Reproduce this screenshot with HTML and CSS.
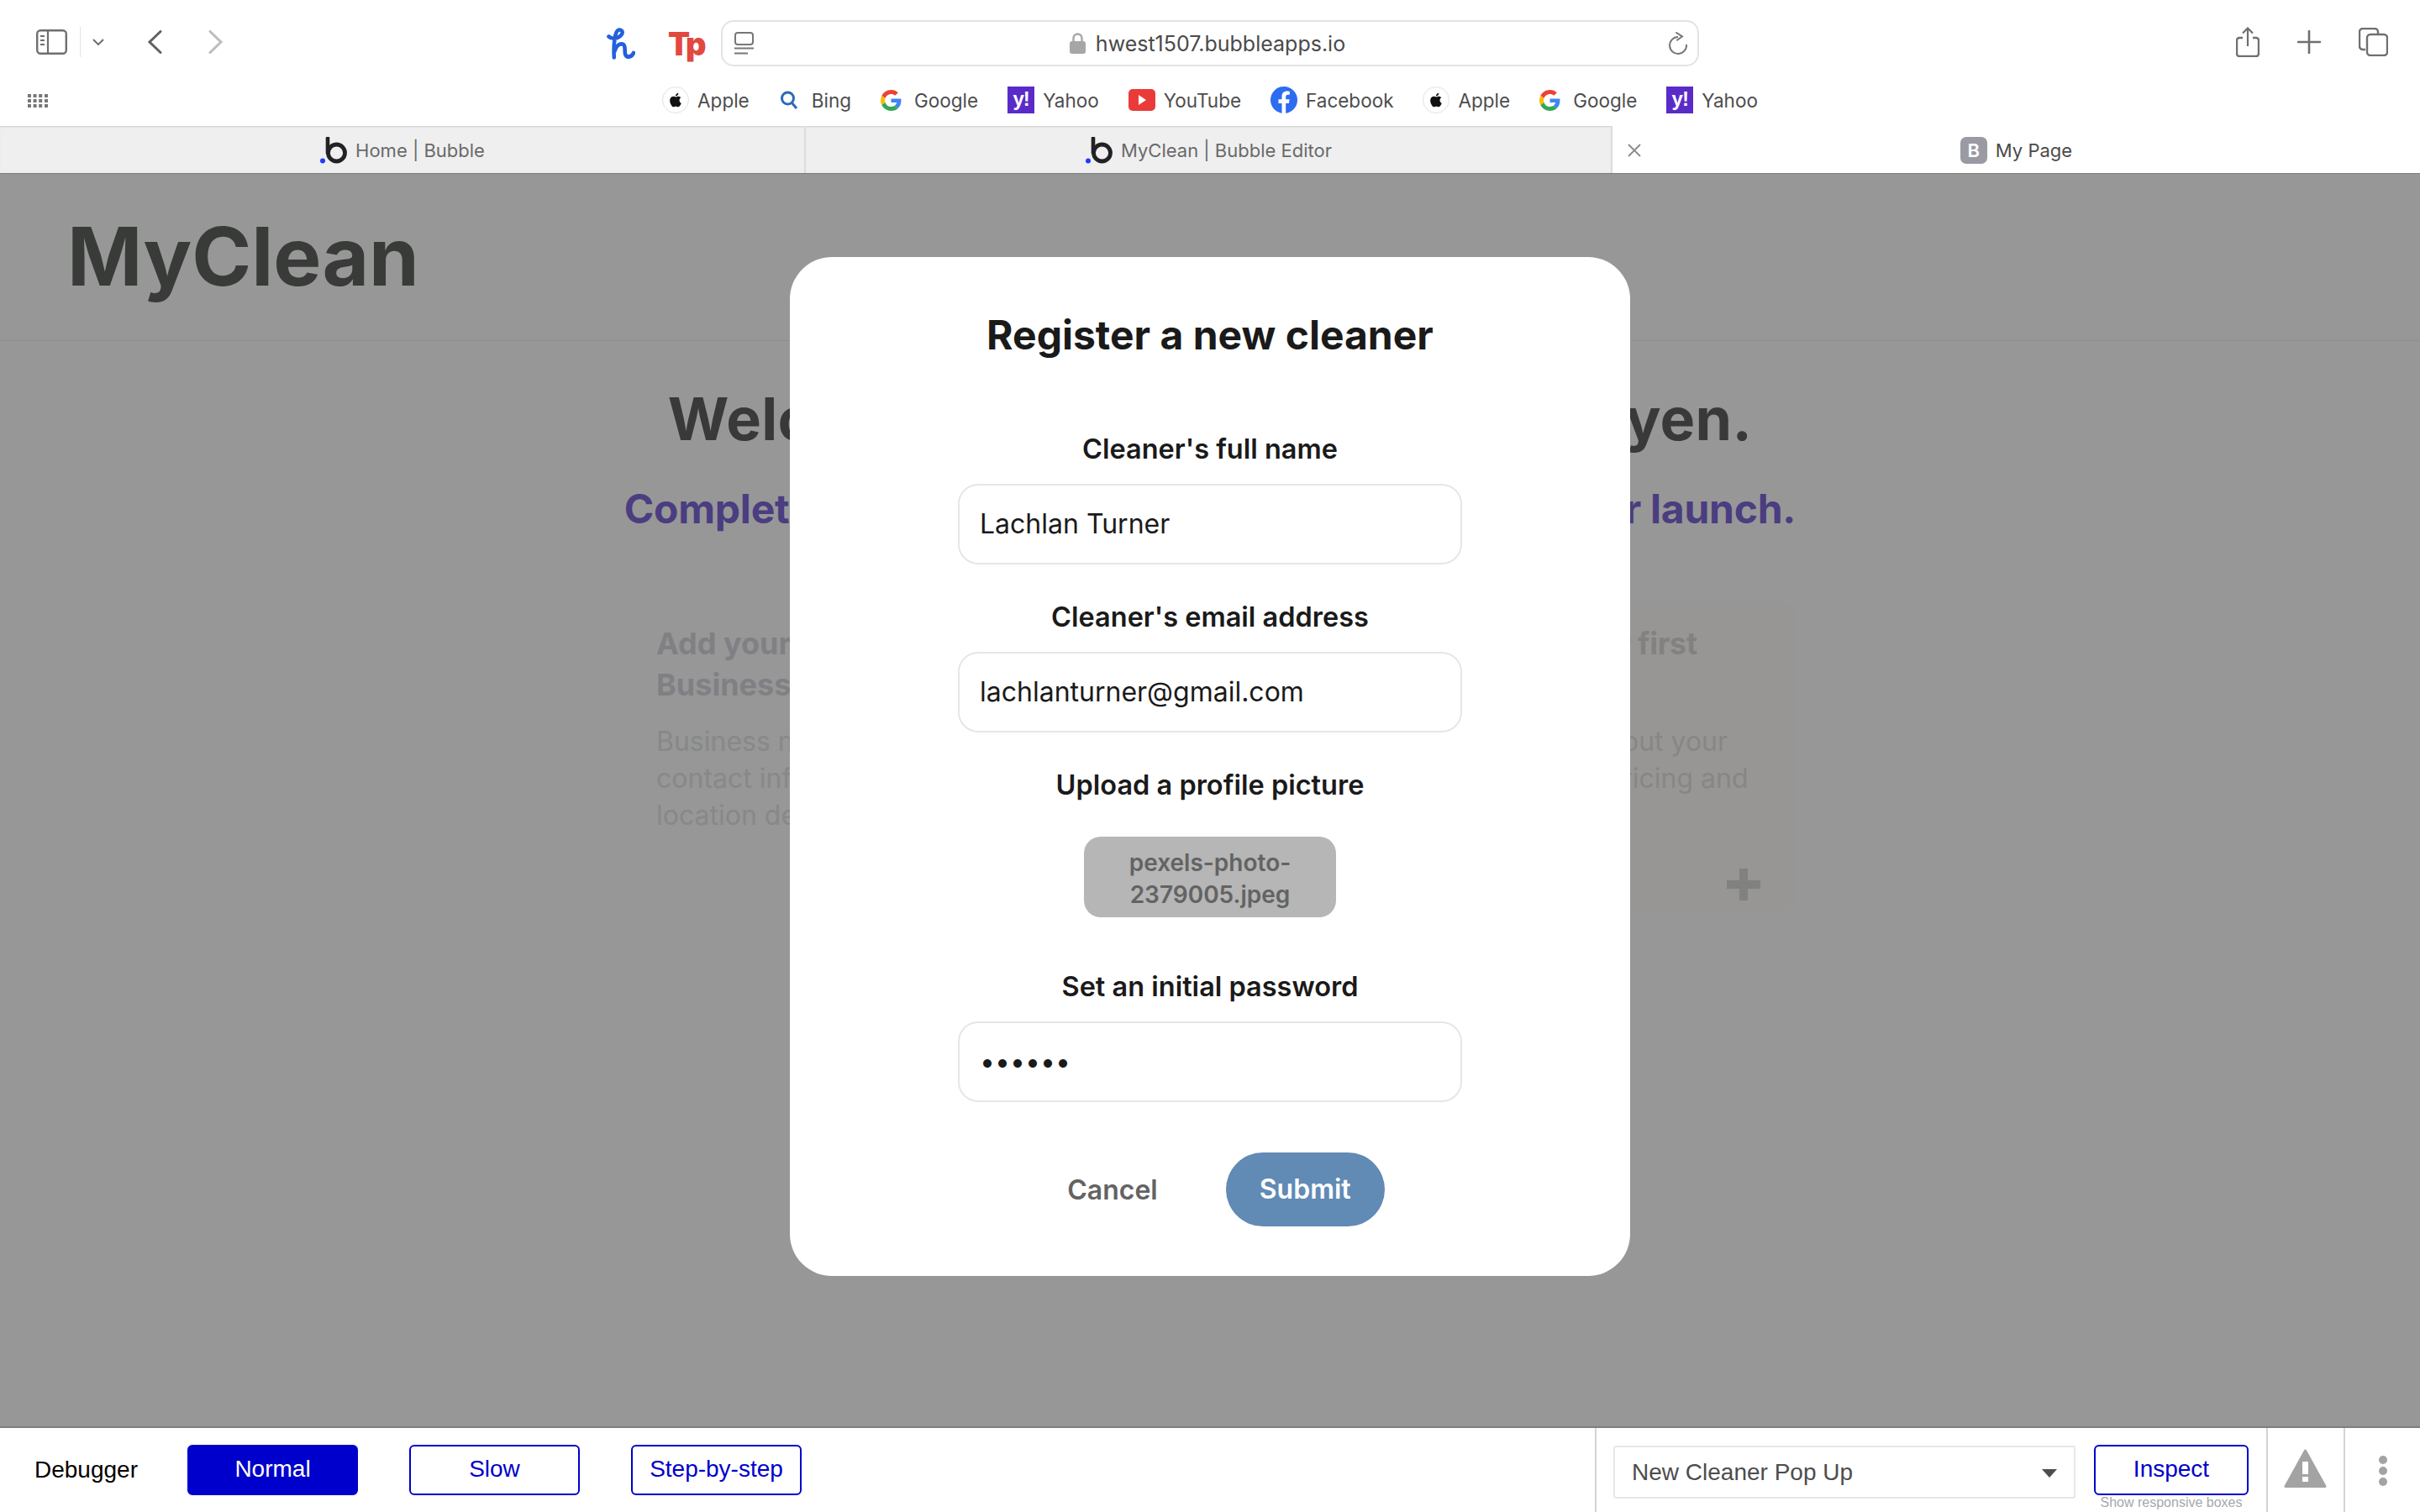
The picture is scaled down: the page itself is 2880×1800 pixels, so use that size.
FILE: index.html
```html
<!DOCTYPE html>
<html lang="en">
<head>
	<meta charset="UTF-8">
	<title>MyClean - Register a new cleaner</title>
	<link rel="stylesheet" href="styles.css">
</head>
<body>
	<svg class="defs" width="0" height="0">
		<symbol id="apple" viewBox="0 0 24 24"><path fill="#111" d="M18.71 19.5c-.83 1.24-1.71 2.45-3.05 2.47-1.34.03-1.77-.79-3.29-.79-1.53 0-2 .77-3.27.82-1.31.05-2.3-1.32-3.14-2.53C4.25 17 2.94 12.45 4.7 9.39c.87-1.52 2.43-2.48 4.12-2.51 1.28-.02 2.5.87 3.29.87.78 0 2.26-1.07 3.8-.91.65.03 2.47.26 3.64 1.98-.09.06-2.17 1.28-2.15 3.81.03 3.02 2.65 4.03 2.68 4.04-.03.07-.42 1.44-1.38 2.83M13 3.5c.73-.83 1.94-1.46 2.94-1.5.13 1.17-.34 2.35-1.04 3.19-.69.85-1.83 1.51-2.95 1.42-.15-1.15.41-2.35 1.05-3.11z"/></symbol>
		<symbol id="google" viewBox="0 0 48 48">
			<path fill="#EA4335" d="M24 9.5c3.54 0 6.71 1.22 9.21 3.6l6.85-6.85C35.9 2.38 30.47 0 24 0 14.62 0 6.51 5.38 2.56 13.22l7.98 6.19C12.43 13.72 17.74 9.5 24 9.5z"/>
			<path fill="#4285F4" d="M46.98 24.55c0-1.57-.15-3.09-.38-4.55H24v9.02h12.94c-.58 2.96-2.26 5.48-4.78 7.18l7.73 6c4.51-4.18 7.09-10.36 7.09-17.65z"/>
			<path fill="#FBBC05" d="M10.53 28.59c-.48-1.45-.76-2.99-.76-4.59s.27-3.14.76-4.59l-7.98-6.19C.92 16.46 0 20.12 0 24c0 3.88.92 7.54 2.56 10.78l7.97-6.19z"/>
			<path fill="#34A853" d="M24 48c6.48 0 11.93-2.13 15.89-5.81l-7.73-6c-2.15 1.45-4.92 2.3-8.16 2.3-6.26 0-11.57-4.22-13.47-9.91l-7.98 6.19C6.51 42.62 14.62 48 24 48z"/>
		</symbol>
		<symbol id="bubble" viewBox="0 0 34 32">
			<circle cx="4" cy="28.500" r="3" fill="#1f3bff"/>
			<path d="M10 1.500V19" fill="none" stroke="#222226" stroke-width="4.600" stroke-linecap="round"/>
			<circle cx="20.500" cy="19" r="10" fill="none" stroke="#222226" stroke-width="4.800"/>
		</symbol>
	</svg>

	<div class="toolbar">
		<div class="tool-left">
			<svg class="ico-sidebar" width="37" height="30" viewBox="0 0 37 30"><rect x="1.200" y="1.200" width="34.600" height="27.600" rx="4" fill="none" stroke="#6f6f6f" stroke-width="2.400"/><path d="M14 1v28" stroke="#6f6f6f" stroke-width="2.200"/><path d="M5 8h5M5 13h5M5 18h5" stroke="#6f6f6f" stroke-width="2"/></svg>
			<span class="tool-sep"></span>
			<svg class="ico-down" width="14" height="8" viewBox="0 0 14 8"><path d="M1 1l6 6 6-6" fill="none" stroke="#6f6f6f" stroke-width="2"/></svg>
			<svg class="ico-back" width="18" height="28" viewBox="0 0 18 28"><path d="M16 1.500L3 14l13 12.500" fill="none" stroke="#616161" stroke-width="3" stroke-linecap="round"/></svg>
			<svg class="ico-fwd" width="18" height="28" viewBox="0 0 18 28"><path d="M2 1.500L15 14 2 26.500" fill="none" stroke="#bdbdbd" stroke-width="3" stroke-linecap="round"/></svg>
		</div>
		<svg class="ico-h" width="34" height="38" viewBox="0 0 34 38"><path d="M2.500 10.500C6 14 13 13.500 17.500 8.500 20 5 18 2 14.500 2.500 9.500 3.500 8 20 8.800 35.500M9.500 28C11 22 15 18.500 19 19.500 23 20.500 21 27 22 31 23 36 29 36 32 30" fill="none" stroke="#2460dc" stroke-width="4.600" stroke-linecap="round" stroke-linejoin="round"/></svg>
		<span class="logo-tp">Tp</span>
		<div class="address">
			<svg class="ico-reader" width="23" height="27" viewBox="0 0 23 27"><rect x="1" y="1" width="21" height="14" rx="3" fill="none" stroke="#777" stroke-width="2"/><path d="M0 19.500h23M0 25.500h16" stroke="#777" stroke-width="2.200"/></svg>
			<div class="url">
				<svg width="19" height="25" viewBox="0 0 19 25"><path d="M4.500 11V6.500a5 5 0 0 1 10 0V11" fill="none" stroke="#a6a6a6" stroke-width="2.400"/><rect y="10" width="19" height="15" rx="3" fill="#a6a6a6"/></svg>
				<span>hwest1507.bubbleapps.io</span>
			</div>
			<svg class="ico-reload" width="24" height="28" viewBox="0 0 24 28"><path d="M12 6A10 10 0 1 0 22 15" fill="none" stroke="#777" stroke-width="2"/><path d="M9.300 .5L17 5.300l-6.700 5" fill="none" stroke="#777" stroke-width="2"/></svg>
		</div>
		<div class="tool-right">
			<svg width="28" height="36" viewBox="0 0 28 36"><path d="M8 13H4a3 3 0 0 0-3 3v16a3 3 0 0 0 3 3h20a3 3 0 0 0 3-3V16a3 3 0 0 0-3-3h-4" fill="none" stroke="#6f6f6f" stroke-width="2.400"/><path d="M14 23V2M8 7.500L14 1.500l6 6" fill="none" stroke="#6f6f6f" stroke-width="2.200"/></svg>
			<svg width="28" height="28" viewBox="0 0 28 28"><path d="M14 1v26M1 14h26" stroke="#6f6f6f" stroke-width="2.600" stroke-linecap="round"/></svg>
			<svg width="35" height="34" viewBox="0 0 35 34"><path d="M8 26H5a4 4 0 0 1-4-4V5a4 4 0 0 1 4-4h14a4 4 0 0 1 4 4v3" fill="none" stroke="#6f6f6f" stroke-width="2.400"/><rect x="10" y="8" width="24" height="25" rx="4" fill="none" stroke="#6f6f6f" stroke-width="2.400"/></svg>
		</div>
	</div>

	<div class="bookmarks">
		<svg class="ico-grid" width="24" height="16" viewBox="0 0 24 16"><g fill="#777"><rect width="4" height="4"/><rect x="6.600" width="4" height="4"/><rect x="13.200" width="4" height="4"/><rect x="20" width="4" height="4"/><rect y="6" width="4" height="4"/><rect x="6.600" y="6" width="4" height="4"/><rect x="13.200" y="6" width="4" height="4"/><rect x="20" y="6" width="4" height="4"/><rect y="12" width="4" height="4"/><rect x="6.600" y="12" width="4" height="4"/><rect x="13.200" y="12" width="4" height="4"/><rect x="20" y="12" width="4" height="4"/></g></svg>
		<div class="bm"><span class="apple-disc"><svg width="20" height="20"><use href="#apple"/></svg></span>Apple</div>
		<div class="bm bm-wide"><svg width="24" height="24" viewBox="0 0 24 24"><circle cx="10.500" cy="10" r="7" fill="none" stroke="#2a6ab8" stroke-width="3"/><path d="M15 15l6 7" stroke="#2a6ab8" stroke-width="3"/></svg>Bing</div>
		<div class="bm bm-wide"><svg width="25" height="25"><use href="#google"/></svg>Google</div>
		<div class="bm"><span class="yahoo">y!</span>Yahoo</div>
		<div class="bm"><svg width="32" height="26" viewBox="0 0 32 26"><rect width="32" height="26" rx="5" fill="#ea3b3b"/><path d="M12 7l9 6-9 6z" fill="#fff"/></svg>YouTube</div>
		<div class="bm"><svg width="32" height="32" viewBox="0 0 32 32"><circle cx="16" cy="16" r="16" fill="#2d6cf0"/><path d="M13.500 32V20H9.500v-4.800h4v-3.500c0-4 2.400-6.200 6-6.200 1.700 0 3.300.3 3.300.3v4h-2c-2 0-2.600 1.200-2.600 2.500v2.900h4.400l-.7 4.800h-3.700v12z" fill="#fff"/></svg>Facebook</div>
		<div class="bm"><span class="apple-disc"><svg width="20" height="20"><use href="#apple"/></svg></span>Apple</div>
		<div class="bm bm-wide"><svg width="25" height="25"><use href="#google"/></svg>Google</div>
		<div class="bm"><span class="yahoo">y!</span>Yahoo</div>
	</div>

	<div class="tabs">
		<div class="tab tab-one"><svg width="34" height="32"><use href="#bubble"/></svg>Home | Bubble</div>
		<div class="tab tab-two"><svg width="34" height="32"><use href="#bubble"/></svg>MyClean | Bubble Editor</div>
		<div class="tab tab-active">
			<svg class="tab-close" width="16" height="16" viewBox="0 0 16 16"><path d="M1 1l14 14M15 1L1 15" stroke="#8a8a8a" stroke-width="1.800"/></svg>
			<span class="badge">B</span>My Page
		</div>
	</div>

	<div class="page">
		<div class="page-head">MyClean</div>
		<div class="welcome">Welcome to MyClean, Henry Nguyen.</div>
		<div class="subtitle">Complete these steps to get your business ready for launch.</div>
		<div class="cards">
			<div class="card card-one">
				<h3>Add your first<br>Business details</h3>
				<p>Business name,<br>contact information,<br>location details</p>
			</div>
			<div class="card card-two"></div>
			<div class="card card-three">
				<h3>Define your first<br>service</h3>
				<p>Tell users about your<br>Our offers, pricing and</p>
				<svg class="card-plus" width="40" height="38" viewBox="0 0 40 38"><path d="M20 0v38M0 19h40" stroke="#818180" stroke-width="10"/></svg>
			</div>
		</div>

		<div class="modal">
			<h1>Register a new cleaner</h1>
			<label>Cleaner's full name</label>
			<div class="field">Lachlan Turner</div>
			<label>Cleaner's email address</label>
			<div class="field">lachlanturner@gmail.com</div>
			<label class="label-upload">Upload a profile picture</label>
			<div class="upload">pexels-photo-<br>2379005.jpeg</div>
			<label>Set an initial password</label>
			<div class="field field-pass">••••••</div>
			<div class="modal-actions">
				<span class="cancel">Cancel</span>
				<span class="submit">Submit</span>
			</div>
		</div>
	</div>

	<div class="debugger">
		<span class="debug-label">Debugger</span>
		<span class="dbtn dbtn-on">Normal</span>
		<span class="dbtn">Slow</span>
		<span class="dbtn">Step-by-step</span>
		<div class="debug-right">
			<div class="debug-select">New Cleaner Pop Up<i class="select-arrow"></i></div>
			<div class="inspect-wrap">
				<span class="dbtn dbtn-inspect">Inspect</span>
				<small>Show responsive boxes</small>
			</div>
			<div class="debug-warn"><svg width="51" height="47" viewBox="0 0 51 47"><path d="M25.500 2L49 44.500H2z" fill="#a3a3a3" stroke="#a3a3a3" stroke-width="3" stroke-linejoin="round"/><rect x="22" y="15" width="7" height="15" fill="#fff"/><rect x="22" y="33" width="7" height="6" fill="#fff"/></svg></div>
			<div class="debug-more"><i></i><i></i><i></i></div>
		</div>
	</div>
</body>
</html>
```

FILE: styles.css
```css
* {
	box-sizing: border-box;
}
html, body {
	margin: 0;
	height: 1800px;
	overflow: hidden;
}
body {
	display: flex;
	flex-direction: column;
	background-color: #fff;
	font-family: Inter, "Liberation Sans", sans-serif;
}
.defs {
	display: none;
}

/* browser chrome */
.toolbar {
	height: 88px;
	display: flex;
	align-items: flex-start;
	padding-top: 24px;
	position: relative;
}
.tool-left {
	width: 722px;
	display: flex;
	align-items: center;
	height: 52px;
	padding-left: 43px;
}
.tool-sep {
	width: 1px;
	height: 36px;
	background-color: #e4e4e4;
	margin: 0 14px 0 15px;
}
.ico-back {
	margin-left: 51px;
}
.ico-fwd {
	margin-left: 55px;
}
.ico-h {
	margin-top: 9px;
}
.logo-tp {
	width: 36px;
	margin: 9px 0 0 39px;
	font-size: 38px;
	font-weight: 900;
	line-height: 38px;
	letter-spacing: -3px;
	color: #e2483f;
}
.address {
	width: 1164px;
	height: 55px;
	margin-left: 27px;
	border: 2px solid #e3e3e3;
	border-radius: 15px;
	display: flex;
	align-items: center;
	padding: 0 11px 0 14px;
}
.url {
	flex: 1;
	display: flex;
	align-items: center;
	justify-content: center;
	gap: 12px;
	font-size: 25px;
	color: #4a4a4a;
	padding-right: 8px;
}
.tool-right {
	flex: 1;
	display: flex;
	align-items: center;
	gap: 45px;
	height: 52px;
	padding-left: 639px;
}
.bookmarks {
	height: 62px;
	display: flex;
	align-items: center;
	justify-content: center;
	gap: 35px;
	position: relative;
	font-size: 22.5px;
	color: #4d4d4d;
}
.ico-grid {
	position: absolute;
	left: 33px;
	top: 24px;
}
.bm {
	display: flex;
	align-items: center;
	gap: 10px;
}
.bm-wide {
	gap: 15px;
}
.apple-disc {
	width: 32px;
	height: 32px;
	border-radius: 50%;
	border: 1px solid #e2e2e2;
	display: flex;
	align-items: center;
	justify-content: center;
}
.yahoo {
	width: 32px;
	height: 32px;
	background-color: #5a2bc8;
	color: #fff;
	font: bold 24px/30px "Liberation Sans", sans-serif;
	text-align: center;
	letter-spacing: -1px;
}
.tabs {
	height: 56px;
	display: flex;
	font-size: 22px;
	color: #6a6a6a;
}
.tab {
	display: flex;
	align-items: center;
	justify-content: center;
	gap: 9px;
	background-color: #efefef;
	border-right: 2px solid #dcdcdc;
	padding-top: 2px;
	box-shadow: inset 0 2px 2px -1px #cfcfcf;
}
.tab-one {
	width: 959px;
}
.tab-two {
	width: 960px;
}
.tab-active {
	flex: 1;
	background-color: #fff;
	border-right: 0;
	color: #4a4a4a;
	gap: 10px;
	position: relative;
	box-shadow: none;
}
.tab-close {
	position: absolute;
	left: 18px;
	top: 21px;
}
.badge {
	width: 32px;
	height: 32px;
	border-radius: 7px;
	background-color: #9a9aa4;
	color: #fff;
	font-size: 22px;
	font-weight: 600;
	line-height: 32px;
	text-align: center;
}

/* dimmed page behind the popup */
.page {
	flex: 1;
	position: relative;
	background-color: #979797;
	border-top: 1px solid #7d7d7d;
	border-bottom: 2px solid #7e7e7e;
	overflow: hidden;
}
.page-head {
	height: 199px;
	padding-left: 80px;
	border-bottom: 1px solid #8e8e8e;
	font-size: 96px;
	font-weight: 700;
	line-height: 196px;
	color: #393b39;
}
.welcome {
	margin-top: 48px;
	text-align: center;
	font-size: 70px;
	font-weight: 700;
	line-height: 90px;
	letter-spacing: .3px;
	color: #393939;
}
.subtitle {
	margin-top: 32px;
	text-align: center;
	font-size: 48px;
	font-weight: 700;
	line-height: 60px;
	letter-spacing: -.25px;
	color: #4a3d80;
}
.cards {
	width: 1398px;
	margin: 80px auto 0;
	display: flex;
	gap: 40px;
}
.card {
	flex: 1;
	height: 368px;
	padding: 26px 40px;
	border-radius: 20px;
	position: relative;
}
.card-one {
	background-color: #969796;
}
.card-three {
	background-color: #979695;
}
.card h3 {
	margin: 0;
	font-size: 36px;
	font-weight: 700;
	line-height: 49px;
	color: #808084;
}
.card p {
	margin: 21px 0 0;
	font-size: 32px;
	line-height: 44px;
	color: #87888a;
	white-space: nowrap;
}
.card-three h3 {
	letter-spacing: -.3px;
	color: #828180;
}
.card-three p {
	color: #878685;
}
.card-plus {
	position: absolute;
	right: 44px;
	bottom: 12px;
}
.modal {
	position: absolute;
	left: 940px;
	top: 99px;
	width: 1000px;
	height: 1213px;
	background-color: #fff;
	border-radius: 50px;
	display: flex;
	flex-direction: column;
	align-items: center;
	padding-top: 62px;
	color: #1a1a1a;
}
.modal h1 {
	margin: 0 0 85px;
	font-size: 48px;
	font-weight: 700;
	line-height: 62px;
}
.modal label {
	font-size: 32.5px;
	font-weight: 600;
	line-height: 40px;
	margin-bottom: 21px;
}
.modal .label-upload {
	margin-bottom: 41px;
}
.field {
	width: 600px;
	height: 96px;
	flex: none;
	margin-bottom: 43px;
	padding: 0 24px;
	border: 2px solid #e6e6e6;
	border-radius: 24px;
	font-size: 32px;
	line-height: 92px;
}
.upload {
	width: 300px;
	height: 96px;
	flex: none;
	margin-bottom: 63px;
	padding-top: 12px;
	border-radius: 20px;
	background-color: #b5b6b5;
	color: #636363;
	font-size: 28px;
	font-weight: 600;
	line-height: 38px;
	text-align: center;
}
.field-pass {
	margin-bottom: 60px;
}
.modal-actions {
	display: flex;
	align-items: center;
	gap: 81px;
	font-size: 32px;
	font-weight: 600;
	margin-left: 38px;
}
.cancel {
	color: #636363;
}
.submit {
	width: 189px;
	height: 88px;
	border-radius: 44px;
	background-color: #618ab5;
	color: #fff;
	line-height: 88px;
	text-align: center;
}

/* debugger bar */
.debugger {
	height: 100px;
	flex: none;
	display: flex;
	align-items: flex-start;
	background-color: #fff;
	font-family: "Liberation Sans", sans-serif;
	font-size: 28px;
}
.debug-label {
	width: 223px;
	padding-left: 41px;
	line-height: 100px;
	color: #000;
}
.dbtn {
	width: 203px;
	height: 60px;
	margin: 20px 61px 0 0;
	border: 2px solid #0000cc;
	border-radius: 6px;
	color: #0000cc;
	line-height: 54px;
	text-align: center;
}
.dbtn-on {
	background-color: #0000cc;
	color: #fff;
}
.debug-right {
	margin-left: auto;
	width: 982px;
	height: 100px;
	display: flex;
	border-left: 2px solid #d4d4d4;
}
.debug-select {
	width: 550px;
	height: 63px;
	margin: 21px 0 0 20px;
	padding-left: 20px;
	border: 2px solid #e8e8e8;
	border-radius: 3px;
	color: #4d4d4d;
	line-height: 60px;
	position: relative;
}
.select-arrow {
	position: absolute;
	right: 20px;
	top: 26px;
	border-top: 10px solid #4d4d4d;
	border-left: 9px solid transparent;
	border-right: 9px solid transparent;
}
.inspect-wrap {
	width: 184px;
	margin-left: 22px;
	text-align: center;
}
.inspect-wrap .dbtn {
	display: block;
	width: 184px;
	margin: 20px 0 0;
}
.inspect-wrap small {
	display: block;
	margin: 0 -10px;
	font-size: 16px;
	line-height: 18px;
	color: #a3a8ae;
	white-space: nowrap;
}
.debug-warn {
	width: 92px;
	margin-left: 21px;
	border-left: 2px solid #d4d4d4;
	padding: 25px 0 0 19px;
}
.debug-more {
	flex: 1;
	border-left: 2px solid #d4d4d4;
	display: flex;
	flex-direction: column;
	align-items: center;
	gap: 3px;
	padding-top: 33px;
}
.debug-more i {
	width: 10px;
	height: 10px;
	border-radius: 50%;
	background-color: #a3a3a3;
}
```
